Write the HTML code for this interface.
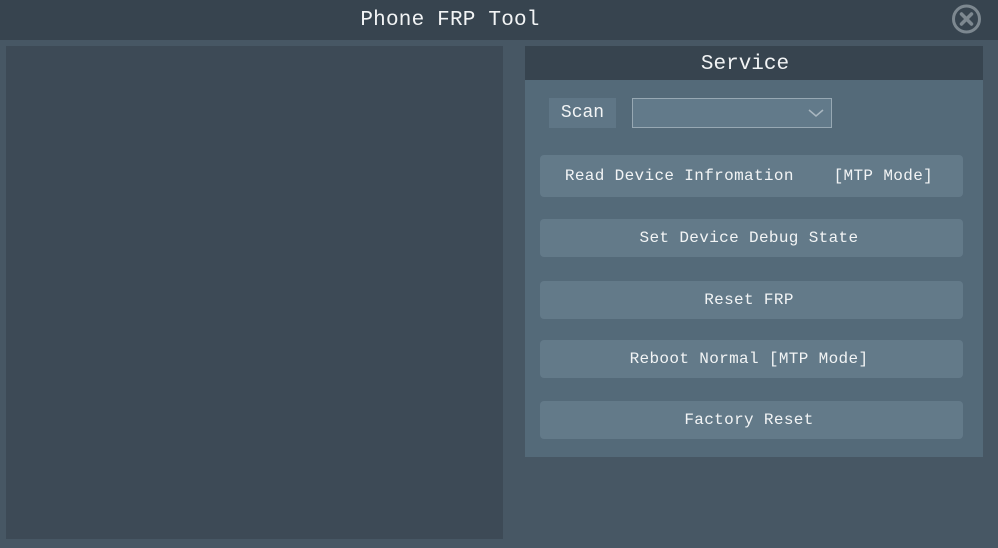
<!DOCTYPE html>
<html><head><style>
body{margin:0;width:998px;height:548px;background:#475764;position:relative;overflow:hidden;font-family:"Liberation Mono",monospace;color:#f2f4f5}
.t{position:absolute;left:0;top:0;width:998px;height:40px;background:#37444f;line-height:39px;font-size:21px;letter-spacing:0.2px}
.t span{position:absolute;left:0;width:900px;text-align:center;top:1px}
.l{position:absolute;left:6px;top:46px;width:497px;height:493px;background:#3d4a56}
.s{position:absolute;left:525px;top:46px;width:458px;height:411px;background:#546a79}
.h{height:34px;background:#37444f;text-align:center;line-height:38px;font-size:21px;padding-right:18px}
.sc{position:absolute;left:24px;top:52px;width:67px;height:30px;background:#5f7686;text-align:center;line-height:30px;font-size:18px}
.dd{position:absolute;left:107px;top:52px;width:198px;height:28px;background:#627a8a;border:1px solid #97a8b3}
.b{position:absolute;left:15px;width:423px;background:#637a89;border-radius:4px;text-align:center;font-size:16px;letter-spacing:0.35px;white-space:pre;text-indent:-5px}
</style></head><body>
<div class="t"><span>Phone FRP Tool</span></div>
<svg style="position:absolute;left:951px;top:4px" width="32" height="32" viewBox="0 0 32 32"><circle cx="15.5" cy="15" r="13" fill="none" stroke="#7d8890" stroke-width="3"/><path d="M10.5 10 L20.5 20 M20.5 10 L10.5 20" stroke="#7d8890" stroke-width="3.5" stroke-linecap="round"/></svg>
<div class="l"></div>
<div class="s">
<div class="h">Service</div>
<div class="sc">Scan</div>
<div class="dd"><svg style="position:absolute;left:175px;top:9px" width="16" height="10"><path d="M1 2 L8 8 L15 2" fill="none" stroke="#a9b7c0" stroke-width="1.5"/></svg></div>
<div class="b" style="top:109px;height:42px;line-height:42px">Read Device Infromation    [MTP Mode]</div>
<div class="b" style="top:173px;height:38px;line-height:38px">Set Device Debug State</div>
<div class="b" style="top:235px;height:38px;line-height:38px">Reset FRP</div>
<div class="b" style="top:294px;height:38px;line-height:38px">Reboot Normal [MTP Mode]</div>
<div class="b" style="top:355px;height:38px;line-height:38px">Factory Reset</div>
</div>
</body></html>
